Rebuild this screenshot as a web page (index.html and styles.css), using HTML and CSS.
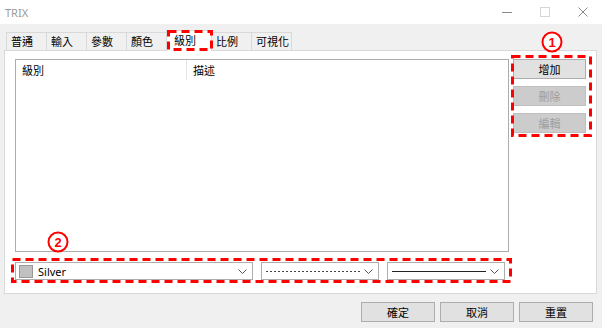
FILE: index.html
```html
<!DOCTYPE html>
<html lang="zh-Hant">
<head>
    <meta charset="UTF-8">
    <title>TRIX</title>
    <link rel="stylesheet" href="styles.css">
</head>
<body>

    <div class="titlebar">
        <div class="title">TRIX</div>
        <div class="window-controls">
            <span class="win-btn">
                <svg width="10" height="10" viewBox="0 0 10 10"><line x1="0" y1="5.5" x2="10" y2="5.5" stroke="#8a8a8a" stroke-width="1"/></svg>
            </span>
            <span class="win-btn">
                <svg width="10" height="10" viewBox="0 0 10 10"><rect x="0.5" y="0.5" width="9" height="9" fill="none" stroke="#d6d6d6" stroke-width="1"/></svg>
            </span>
            <span class="win-btn">
                <svg width="10" height="10" viewBox="0 0 10 10"><path d="M0.5 0.5 L9.5 9.5 M9.5 0.5 L0.5 9.5" stroke="#8a8a8a" stroke-width="1"/></svg>
            </span>
        </div>
    </div>

    <div class="main">
        <div class="tabs">
            <div class="tab">普通</div>
            <div class="tab">輸入</div>
            <div class="tab">參數</div>
            <div class="tab">顏色</div>
            <div class="tab active">級別</div>
            <div class="tab">比例</div>
            <div class="tab">可視化</div>
        </div>

        <div class="panel">
            <div class="panel-top">
                <div class="list-view">
                    <div class="list-header">
                        <div class="col col-level">級別</div>
                        <div class="col col-desc">描述</div>
                    </div>
                </div>
                <div class="side-buttons">
                    <button class="btn">增加</button>
                    <button class="btn" disabled>刪除</button>
                    <button class="btn" disabled>編輯</button>
                </div>
            </div>

            <div class="combo-row">
                <div class="combo combo-color">
                    <span class="swatch"></span>
                    <span class="combo-text">Silver</span>
                    <svg class="chevron" width="9" height="5" viewBox="0 0 9 5"><polyline points="0.5,0.5 4.5,4.5 8.5,0.5" fill="none" stroke="#555" stroke-width="1"/></svg>
                </div>
                <div class="combo combo-line">
                    <span class="line dashed"></span>
                    <svg class="chevron" width="9" height="5" viewBox="0 0 9 5"><polyline points="0.5,0.5 4.5,4.5 8.5,0.5" fill="none" stroke="#555" stroke-width="1"/></svg>
                </div>
                <div class="combo combo-line">
                    <span class="line solid"></span>
                    <svg class="chevron" width="9" height="5" viewBox="0 0 9 5"><polyline points="0.5,0.5 4.5,4.5 8.5,0.5" fill="none" stroke="#555" stroke-width="1"/></svg>
                </div>
            </div>
        </div>

        <div class="footer">
            <button class="btn btn-wide">確定</button>
            <button class="btn btn-wide">取消</button>
            <button class="btn btn-wide">重置</button>
        </div>
    </div>

    <!-- annotation marks drawn over the dialog -->
    <svg class="annotations" width="602" height="328" viewBox="0 0 602 328">
        <rect x="12.5" y="259.5" width="498" height="22" fill="none" stroke="#ff0000" stroke-width="3" stroke-dasharray="8 5"/>
        <rect x="512.5" y="56.5" width="78" height="79" fill="none" stroke="#ff0000" stroke-width="3" stroke-dasharray="8 5"/>
        <rect x="168.5" y="31.5" width="43" height="18" fill="none" stroke="#ff0000" stroke-width="3" stroke-dasharray="8 5"/>
        <circle cx="552" cy="42" r="9.5" fill="#fff" stroke="#ff0000" stroke-width="2"/>
        <text x="552" y="47" class="anno-num">1</text>
        <circle cx="58" cy="242" r="9.5" fill="#fff" stroke="#ff0000" stroke-width="2"/>
        <text x="58" y="247" class="anno-num">2</text>
    </svg>

</body>
</html>
```

FILE: styles.css
```css
* {
    margin: 0;
    padding: 0;
    box-sizing: border-box;
}
body {
    width: 602px;
    height: 328px;
    background: #f0f0f0;
    font-family: "Noto Sans CJK TC", "Noto Sans", sans-serif;
    font-size: 11px;
    color: #000;
    overflow: hidden;
    position: relative;
}
.titlebar {
    height: 24px;
    background: #fff;
    display: flex;
    align-items: center;
}
.title {
    padding-left: 5px;
    color: #9a9a9a;
    font-family: "Noto Sans", sans-serif;
    font-size: 11px;
}
.window-controls {
    margin-left: auto;
    display: flex;
}
.win-btn {
    width: 38px;
    height: 24px;
    display: flex;
    align-items: center;
    justify-content: center;
}
.main {
    padding: 7px 5px 0 4px;
}
.tabs {
    display: flex;
    align-items: flex-end;
    height: 19px;
    padding-left: 2px;
}
.tab {
    width: 41px;
    height: 18px;
    margin-right: -1px;
    border: 1px solid #d9d9d9;
    border-bottom: none;
    background: #f0f0f0;
    padding-left: 4px;
    line-height: 16px;
    white-space: nowrap;
}
.tab.active {
    width: 46px;
    height: 21px;
    margin-bottom: -1px;
    padding-left: 7px;
    background: #fff;
    position: relative;
    z-index: 1;
    line-height: 19px;
}
.panel {
    height: 244px;
    background: #fff;
    border: 1px solid #d9d9d9;
    padding: 8px 10px 0 10px;
}
.panel-top {
    display: flex;
    gap: 4px;
}
.list-view {
    width: 495px;
    height: 193px;
    border: 1px solid #adadad;
    background: #fff;
}
.list-header {
    display: flex;
    height: 20px;
}
.col {
    padding-left: 6px;
    line-height: 20px;
}
.col-level {
    width: 171px;
    border-right: 1px solid #e5e5e5;
}
.side-buttons {
    display: flex;
    flex-direction: column;
    gap: 7px;
}
.btn {
    width: 73px;
    height: 20px;
    background: #e1e1e1;
    border: 1px solid #adadad;
    font-family: inherit;
    font-size: 11px;
    color: #000;
}
.btn:disabled {
    background: #cccccc;
    border-color: #bfbfbf;
    color: #9d9d9d;
}
.combo-row {
    display: flex;
    gap: 8px;
    margin-top: 10px;
}
.combo {
    height: 18px;
    border: 1px solid #adadad;
    background: #fff;
    display: flex;
    align-items: center;
    padding: 0 5px 0 3px;
}
.combo-color {
    width: 238px;
}
.combo-line {
    width: 118px;
    padding-left: 4px;
}
.swatch {
    width: 14px;
    height: 13px;
    background: #c0c0c0;
    border: 1px solid #999;
    margin-right: 5px;
}
.combo-text {
    font-family: "Noto Sans", sans-serif;
    font-size: 11px;
}
.chevron {
    margin-left: auto;
}
.line {
    width: 94px;
    height: 1px;
}
.line.dashed {
    background: repeating-linear-gradient(to right, #444 0, #444 2px, transparent 2px, transparent 4px);
}
.line.solid {
    background: #222;
}
.footer {
    display: flex;
    justify-content: flex-end;
    gap: 5px;
    padding: 8px 4px 0 0;
}
.btn-wide {
    width: 74px;
}
.annotations {
    position: absolute;
    top: 0;
    left: 0;
    z-index: 2;
    pointer-events: none;
}
.anno-num {
    font-family: "Liberation Sans", sans-serif;
    font-size: 13px;
    font-weight: bold;
    fill: #ff0000;
    text-anchor: middle;
}
```
